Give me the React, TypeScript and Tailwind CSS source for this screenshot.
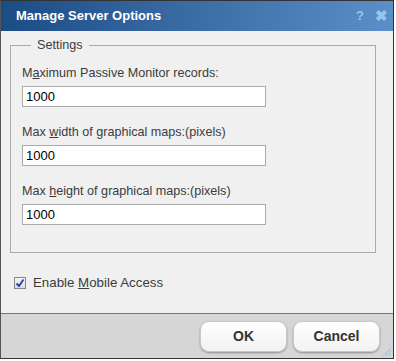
import React, { useState } from 'react';

const font = { fontFamily: '"Liberation Sans", Arial, sans-serif' };

const Field = ({ label, accessKey, value }: { label: string; accessKey: number; value: string }) => {
  const [v, setV] = useState(value);
  return (
    <div className="flex flex-col">
      <label className="text-[12.6px] leading-[16px] text-[#3c3c3c]">
        {label.slice(0, accessKey)}
        <span className="underline">{label[accessKey]}</span>
        {label.slice(accessKey + 1)}
      </label>
      <input
        value={v}
        onChange={e => setV(e.target.value)}
        className="mt-[5px] h-[21px] w-[244px] border border-[#aaa] bg-white px-[3px] text-[13px] text-black outline-none"
      />
    </div>
  );
};

export default function App() {
  const [mobile, setMobile] = useState(true);

  return (
    <div style={font} className="h-[361px] w-[396px] bg-white">
      <div className="flex h-[359px] w-[394px] flex-col border border-[#333] border-l-[#555] bg-[#f0f0f0]">
        <div className="flex h-[30px] items-center justify-between bg-gradient-to-r from-[#1c4c85] to-[#5b8fc7] pl-[15px] pr-[5px]">
          <span className="text-[13px] font-bold text-white">Manage Server Options</span>
          <div className="flex items-center gap-[11px] text-[13px] font-bold text-[#94c6f0]">
            <span>?</span>
            <span className="text-[15px]">✖</span>
          </div>
        </div>
        <div className="flex-1 pl-[9px] pt-[7px]">
          <fieldset className="h-[215px] w-[366px] border border-[#aaa] pl-[11px] pr-[11px] pt-[3px]">
            <legend className="ml-[9px] px-[6px] text-[12.6px] leading-[14px] text-[#3c3c3c]">Settings</legend>
            <div className="mt-[10px] flex flex-col gap-[17px]">
              <Field label="Maximum Passive Monitor records:" accessKey={1} value="1000" />
              <Field label="Max width of graphical maps:(pixels)" accessKey={4} value="1000" />
              <Field label="Max height of graphical maps:(pixels)" accessKey={4} value="1000" />
            </div>
          </fieldset>
          <label className="mt-[20px] flex items-center gap-[7px] pl-[4px] text-[13.3px] text-[#3c3c3c]">
            <span
              onClick={() => setMobile(!mobile)}
              className="flex h-[12px] w-[12px] items-center justify-center border border-[#888] bg-gradient-to-b from-[#f4f4f4] to-[#dcdcdc]"
            >
              {mobile && (
                <svg width="10" height="10" viewBox="0 0 10 10">
                  <path d="M1.5 5.5 L4 8 L8.5 1.5" stroke="#2b3fa8" strokeWidth="1.8" fill="none" />
                </svg>
              )}
            </span>
            <span>
              Enable <span className="underline">M</span>obile Access
            </span>
          </label>
        </div>
        <div className="relative flex h-[45px] items-center justify-end gap-[6px] border-t border-[#777] bg-[#d6d6d6] pr-[13px]">
          <button className="h-[31px] w-[87px] rounded-[9px] border border-[#c8c8c8] bg-gradient-to-b from-white to-[#f2f2f2] text-[14px] font-bold text-[#333] shadow-[0_1px_2px_rgba(0,0,0,0.35)]">
            OK
          </button>
          <button className="h-[31px] w-[87px] rounded-[9px] border border-[#c8c8c8] bg-gradient-to-b from-white to-[#f2f2f2] text-[14px] font-bold text-[#333] shadow-[0_1px_2px_rgba(0,0,0,0.35)]">
            Cancel
          </button>
          <svg className="absolute bottom-[1px] right-[1px]" width="11" height="11" viewBox="0 0 11 11">
            <path d="M10 2 L2 10 M10 5 L5 10 M10 8 L8 10" stroke="#9fb7d0" strokeWidth="1" />
          </svg>
        </div>
      </div>
    </div>
  );
}
